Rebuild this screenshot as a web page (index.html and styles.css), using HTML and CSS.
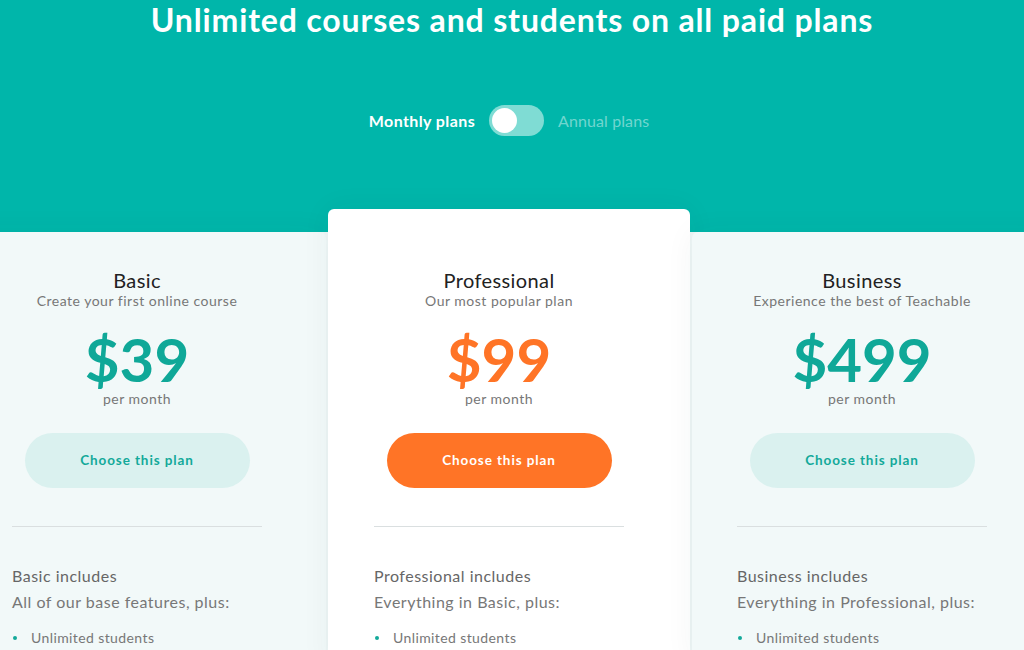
FILE: index.html
```html
<!DOCTYPE html>
<html>
<head>
    <meta charset="UTF-8"/>
    <title>Pricing</title>
    <link rel="stylesheet" href="styles.css">
</head>
<body>
<div class="hero">
    <h1 class="title">Unlimited courses and students on all paid plans</h1>
    <div class="switch">
        <span class="switch-label active">Monthly plans</span>
        <span class="toggle"><span class="knob"></span></span>
        <span class="switch-label">Annual plans</span>
    </div>
</div>
<div class="plans">
    <div class="plan">
        <h2 class="plan-name">Basic</h2>
        <p class="plan-sub">Create your first online course</p>
        <div class="price">$39</div>
        <p class="period">per month</p>
        <a class="choose">Choose this plan</a>
        <hr class="line">
        <h3 class="inc">Basic includes</h3>
        <p class="inc-sub">All of our base features, plus:</p>
        <ul class="features">
            <li>Unlimited students</li>
        </ul>
    </div>
    <div class="plan featured">
        <h2 class="plan-name">Professional</h2>
        <p class="plan-sub">Our most popular plan</p>
        <div class="price">$99</div>
        <p class="period">per month</p>
        <a class="choose">Choose this plan</a>
        <hr class="line">
        <h3 class="inc">Professional includes</h3>
        <p class="inc-sub">Everything in Basic, plus:</p>
        <ul class="features">
            <li>Unlimited students</li>
        </ul>
    </div>
    <div class="plan">
        <h2 class="plan-name">Business</h2>
        <p class="plan-sub">Experience the best of Teachable</p>
        <div class="price">$499</div>
        <p class="period">per month</p>
        <a class="choose">Choose this plan</a>
        <hr class="line">
        <h3 class="inc">Business includes</h3>
        <p class="inc-sub">Everything in Professional, plus:</p>
        <ul class="features">
            <li>Unlimited students</li>
        </ul>
    </div>
</div>
</body>
</html>
```

FILE: styles.css
```css
*{
    margin: 0;
    padding: 0;
    box-sizing: border-box;
}
body{
    font-family: "Lato", "Noto Sans", sans-serif;
    background: #f2f9f9;
    overflow: hidden;
    height: 650px;
}
.hero{
    background: #00b6aa;
    height: 232px;
    padding-top: 2px;
    text-align: center;
}
.title{
    color: #fff;
    font-size: 32px;
    font-weight: 700;
    line-height: 36px;
    letter-spacing: 0.85px;
}
.switch{
    display: flex;
    justify-content: center;
    align-items: center;
    gap: 14px;
    margin-top: 67px;
    padding-right: 6px;
}
.switch-label{
    font-size: 16px;
    color: rgba(255,255,255,0.45);
    letter-spacing: 0.1px;
}
.switch-label.active{
    color: #fff;
    font-weight: 700;
    letter-spacing: 0.4px;
}
.toggle{
    width: 55px;
    height: 31px;
    border-radius: 16px;
    background: #7fdcd4;
    padding: 3px;
    display: flex;
}
.knob{
    width: 25px;
    height: 25px;
    border-radius: 50%;
    background: #fff;
}
.plans{
    display: grid;
    grid-template-columns: 362px 362px 362px;
    gap: 2px;
    margin-left: -36px;
    margin-top: -23px;
    align-items: start;
}
.plan{
    background: #f2f9f9;
    border-radius: 6px 6px 0 0;
    margin-top: 23px;
    height: 430px;
    padding: 36px 64px 0 48px;
    text-align: center;
    box-shadow: 0 0 30px rgba(0,60,60,0.05);
}
.plan.featured{
    background: #fff;
    margin-top: 0;
    height: 460px;
    padding-top: 59px;
    padding-left: 46px;
    padding-right: 66px;
}
.plan:last-child{
    padding-left: 45px;
    padding-right: 67px;
}
.plan-name{
    font-size: 20px;
    font-weight: 400;
    color: #222;
    line-height: 24px;
    letter-spacing: 0.4px;
}
.plan-sub{
    font-size: 14px;
    color: #777;
    line-height: 18px;
    letter-spacing: 0.5px;
}
.price{
    font-size: 60px;
    font-weight: 700;
    color: #0fa898;
    line-height: 58px;
    margin-top: 20px;
}
.featured .price{
    color: #ff7426;
}
.period{
    font-size: 14px;
    color: #777;
    line-height: 18px;
    letter-spacing: 0.5px;
    margin-top: 2px;
}
.choose{
    display: block;
    width: 225px;
    height: 55px;
    line-height: 55px;
    margin: 25px auto 0;
    border-radius: 28px;
    background: #daf1ef;
    color: #13a99a;
    font-size: 13.5px;
    font-weight: 700;
    letter-spacing: 0.9px;
}
.featured .choose{
    background: #ff7426;
    color: #fff;
}
.line{
    border: none;
    border-top: 1px solid #dadfe0;
    margin-top: 38px;
}
.inc{
    text-align: left;
    font-size: 16px;
    font-weight: 400;
    color: #666;
    margin-top: 39px;
    line-height: 20px;
    letter-spacing: 0.5px;
}
.inc-sub{
    text-align: left;
    font-size: 16px;
    color: #777;
    margin-top: 6px;
    line-height: 20px;
    letter-spacing: 0.5px;
}
.features{
    list-style: none;
    text-align: left;
    margin-top: 18px;
}
.features li{
    font-size: 14px;
    color: #777;
    padding-left: 19px;
    position: relative;
    line-height: 16px;
    letter-spacing: 0.4px;
}
.features li::before{
    content: "";
    position: absolute;
    left: 1px;
    top: 6px;
    width: 4px;
    height: 4px;
    border-radius: 50%;
    background: #13a99a;
}
```
